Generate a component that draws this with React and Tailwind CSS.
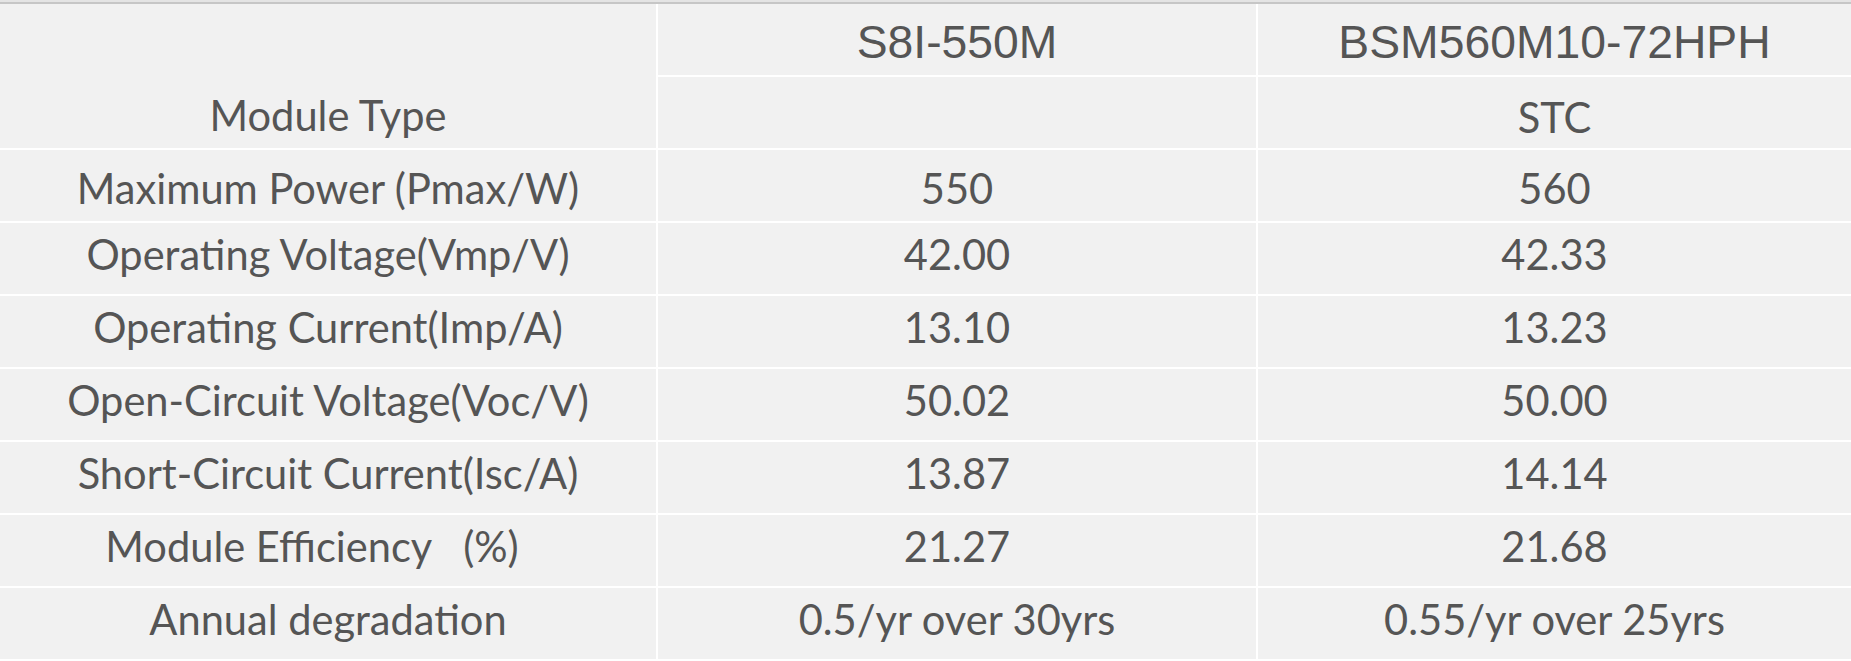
import React from "react";

const rows = [
  ["Maximum Power (Pmax/W)", "550", "560"],
  ["Operating Voltage(Vmp/V)", "42.00", "42.33"],
  ["Operating Current(Imp/A)", "13.10", "13.23"],
  ["Open-Circuit Voltage(Voc/V)", "50.02", "50.00"],
  ["Short-Circuit Current(Isc/A)", "13.87", "14.14"],
  ["Module Efficiency   (%)   ", "21.27", "21.68"],
  ["Annual degradation", "0.5/yr over 30yrs", "0.55/yr over 25yrs"],
];

const lato = "font-['Lato','Liberation_Sans',sans-serif] text-[41.6px] leading-none";
const arial = "font-['Liberation_Sans','Arial',sans-serif] text-[46.3px] leading-none";

function Cell({ children, className = "" }) {
  return (
    <div className={`bg-[#f1f1f1] flex items-center justify-center whitespace-pre text-[#555555] ${className}`}>
      {children}
    </div>
  );
}

export default function App() {
  return (
    <div className="w-[1851px] h-[661px] overflow-hidden bg-white">
      <div className="h-[2px] bg-[#e4e4e4]" />
      <div className="h-[2px] bg-[#c6c6c6]" />
      <div className="grid grid-cols-[656px_598px_1fr] auto-rows-[71px] gap-[2px] bg-white">
        <div className="row-span-2 bg-[#f1f1f1] flex flex-col justify-end">
          <div className={`h-[71px] flex items-center justify-center text-[#555555] pt-[6px] ${lato}`}>
            Module Type
          </div>
        </div>
        <Cell className={`${arial} pt-[6px]`}>S8I-550M</Cell>
        <Cell className={`${arial} pt-[6px]`}>BSM560M10-72HPH</Cell>
        <Cell />
        <Cell className={`${lato} pt-[10px]`}>STC</Cell>
        {rows.map((r, i) => {
          const pad = i === 0 ? "pt-[6px]" : "pb-[8px]";
          return (
            <React.Fragment key={i}>
              <Cell className={`${lato} ${pad}`}>{r[0]}</Cell>
              <Cell className={`${lato} ${pad}`}>{r[1]}</Cell>
              <Cell className={`${lato} ${pad}`}>{r[2]}</Cell>
            </React.Fragment>
          );
        })}
      </div>
    </div>
  );
}
